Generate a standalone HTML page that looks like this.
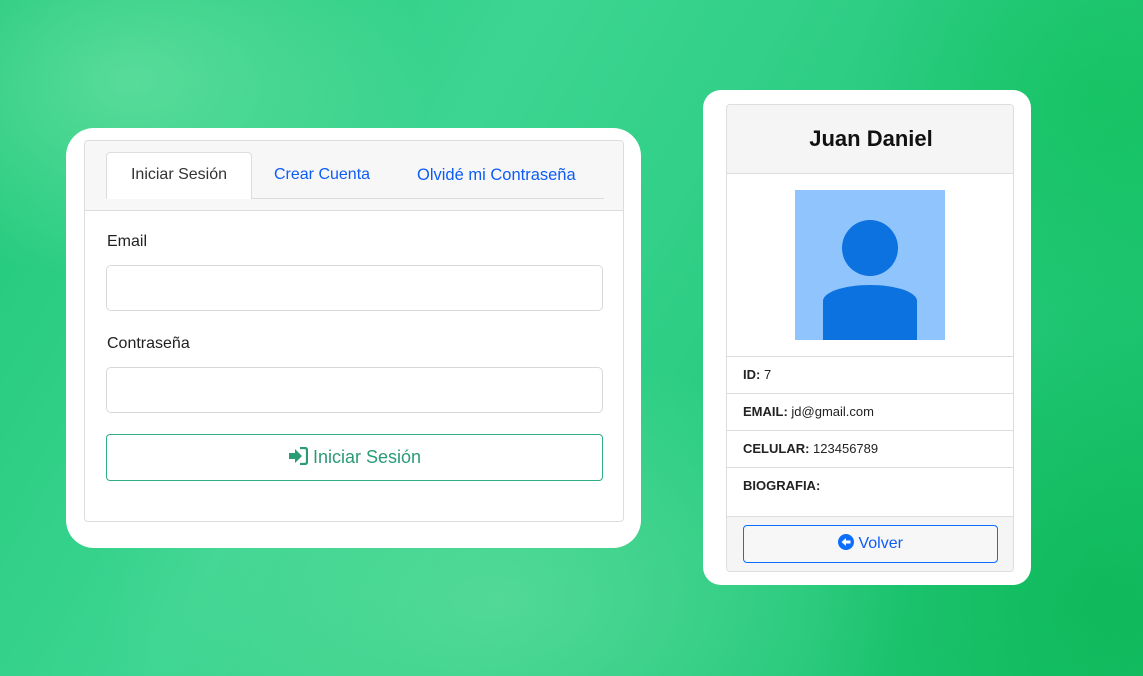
<!DOCTYPE html>
<html><head><meta charset="utf-8"><style>
*{box-sizing:border-box;margin:0;padding:0}
body{width:1143px;height:676px;overflow:hidden;position:relative;font-family:"Liberation Sans",Arial,sans-serif;
background:
radial-gradient(ellipse 300px 200px at 130px 80px,rgba(120,230,170,.6),transparent),
radial-gradient(ellipse 400px 250px at 500px 600px,rgba(110,225,165,.55),transparent),
radial-gradient(ellipse 300px 300px at 1100px 600px,rgba(10,180,80,.6),transparent),
radial-gradient(ellipse 250px 250px at 1100px 100px,rgba(10,190,80,.5),transparent),
linear-gradient(120deg,#1fc878 0%,#3dd592 35%,#2ccd83 60%,#16c068 100%);}
.outer{position:absolute;background:#fff}
.card{position:absolute;border:1px solid #ddd;border-radius:4px;background:#fff;overflow:hidden}
.abs{position:absolute}
.inp{position:absolute;left:21px;width:497px;height:46px;border:1.5px solid #d8d8d8;border-radius:5px;background:#fff}
.lbl{position:absolute;left:22px;font-size:16px;color:#222}
.row{position:absolute;left:0;right:0;border-top:1px solid #ddd;font-size:13px;color:#222;padding-left:16px}
</style></head><body>
<div class="outer" style="left:66px;top:128px;width:575px;height:420px;border-radius:28px"></div>
<div class="card" style="left:84px;top:140px;width:540px;height:382px">
 <div class="abs" style="left:0;top:0;width:540px;height:70px;background:#f7f7f7;border-bottom:1px solid #ddd"></div>
 <div class="abs" style="left:21px;top:57px;width:498px;height:1px;background:#ddd"></div>
 <div class="abs" style="left:21px;top:11px;width:146px;height:47px;background:#fff;border:1px solid #ddd;border-bottom:none;border-radius:4px 4px 0 0"></div>
 <div class="abs" style="left:21px;top:25px;width:146px;text-align:center;font-size:16px;color:#333">Iniciar Sesión</div>
 <div class="abs" style="left:189px;top:25px;font-size:16px;color:#0d5cf5">Crear Cuenta</div>
 <div class="abs" style="left:332px;top:25px;font-size:16.5px;color:#0d5cf5">Olvidé mi Contraseña</div>
 <div class="lbl" style="top:92px">Email</div>
 <div class="inp" style="top:124px"></div>
 <div class="lbl" style="top:194px">Contraseña</div>
 <div class="inp" style="top:226px"></div>
 <div class="abs" style="left:21px;top:293px;width:497px;height:47px;border:1.5px solid #2fae82;border-radius:4px;color:#2a9a77;font-size:18px;text-align:center;line-height:44px">
  <svg width="20" height="18" viewBox="0 0 20 18" style="vertical-align:-2px"><path d="M1 6h6V2l7 7-7 7v-4H1z" fill="#2a9a77"/><path d="M12 1h5a2 2 0 0 1 2 2v12a2 2 0 0 1-2 2h-5" fill="none" stroke="#2a9a77" stroke-width="2.2"/></svg> Iniciar Sesión</div>
</div>

<div class="outer" style="left:703px;top:90px;width:328px;height:495px;border-radius:18px"></div>
<div class="card" style="left:726px;top:104px;width:288px;height:468px">
 <div class="abs" style="left:0;top:0;width:288px;height:69px;background:#f5f5f5;border-bottom:1px solid #ddd;text-align:center;font-size:22px;font-weight:bold;line-height:68px;color:#111">Juan Daniel</div>
 <div class="abs" style="left:68px;top:85px;width:150px;height:150px;background:#90c4fc;overflow:hidden">
  <div class="abs" style="left:47px;top:30px;width:56px;height:56px;border-radius:50%;background:#0c72e0"></div>
  <div class="abs" style="left:28px;top:95px;width:94px;height:70px;border-radius:47px 47px 0 0/16px 16px 0 0;background:#0c72e0"></div>
 </div>
 <div class="row" style="top:251px;height:37px;line-height:36px"><b>ID:</b> 7</div>
 <div class="row" style="top:288px;height:37px;line-height:36px"><b>EMAIL:</b> jd@gmail.com</div>
 <div class="row" style="top:325px;height:37px;line-height:36px"><b>CELULAR:</b> 123456789</div>
 <div class="row" style="top:362px;height:50px;line-height:36px"><b>BIOGRAFIA:</b></div>
 <div class="abs" style="left:0;top:411px;width:288px;height:57px;background:#f5f5f5;border-top:1px solid #ddd"></div>
 <div class="abs" style="left:16px;top:420px;width:255px;height:38px;border:1.5px solid #0d6efd;border-radius:4px;background:#f7f7f7;text-align:center;line-height:35px;font-size:16px;color:#0d5cf5">
  <svg width="16" height="16" viewBox="0 0 16 16" style="vertical-align:-2px"><circle cx="8" cy="8" r="8" fill="#0d6efd"/><path d="M3.5 8 8 4v2.5h4.5v3H8V12z" fill="#fff"/></svg> Volver</div>
</div>
</body></html>
